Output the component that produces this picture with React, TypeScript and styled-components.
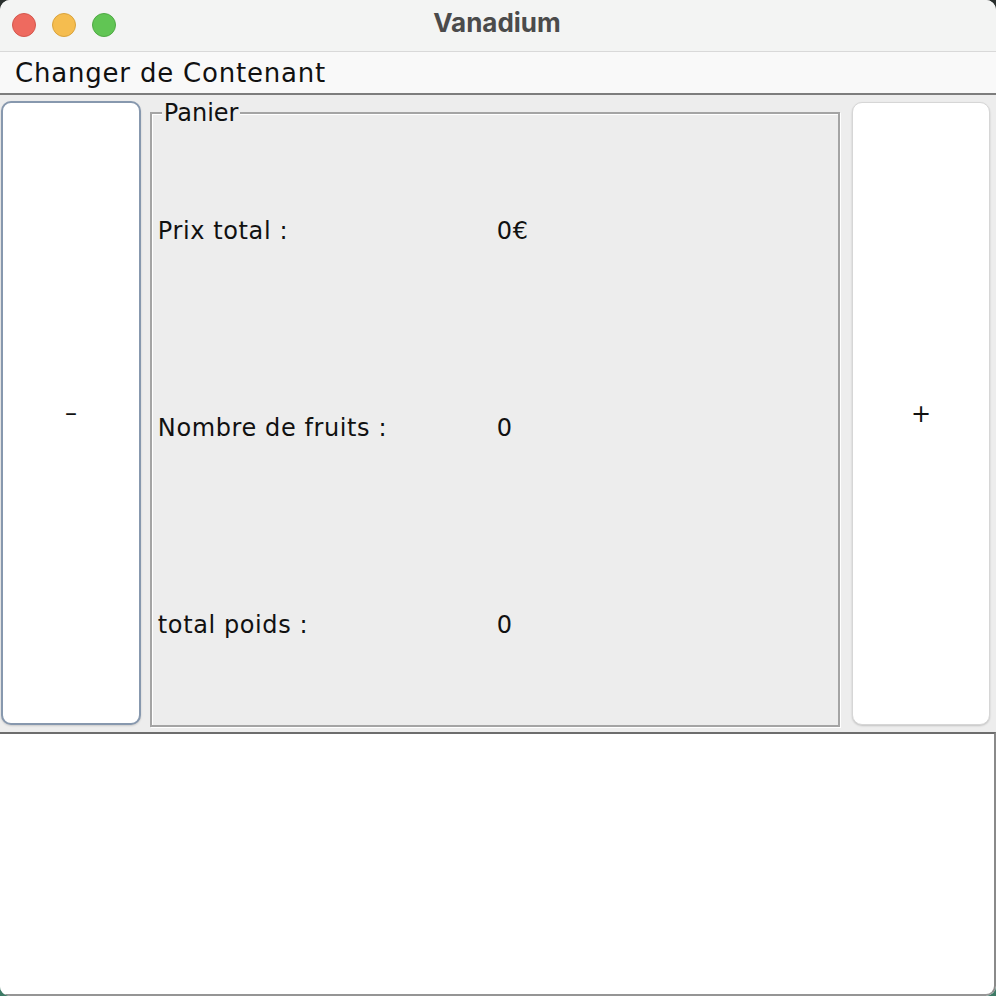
import React from "react";
import styled, { createGlobalStyle } from "styled-components";

const Global = createGlobalStyle`
  html, body { margin: 0; padding: 0; }
  body {
    width: 996px;
    height: 996px;
    overflow: hidden;
    background: linear-gradient(180deg, #2a2f2d 0%, #3d7a65 100%);
    font-family: "DejaVu Sans", "Liberation Sans", sans-serif;
  }
`;

const Window = styled.div`
  width: 996px;
  height: 996px;
  border-radius: 10px;
  overflow: hidden;
  display: flex;
  flex-direction: column;
  background: #ededed;
`;

const TitleBar = styled.div`
  height: 52px;
  box-sizing: border-box;
  border-bottom: 1px solid #d9d9d9;
  background: #f3f4f3;
  display: grid;
  grid-template-columns: 1fr auto 1fr;
  align-items: center;
  padding: 0 12px 2px;
`;

const Lights = styled.div`
  display: flex;
  gap: 16px;
`;

const Light = styled.span<{ $c: string; $b: string }>`
  width: 24px;
  height: 24px;
  border-radius: 50%;
  box-sizing: border-box;
  background: ${(p) => p.$c};
  border: 1px solid ${(p) => p.$b};
`;

const Title = styled.div`
  font-family: Inter, "DejaVu Sans", sans-serif;
  font-weight: 700;
  font-size: 26px;
  color: #4b4b4b;
  padding-right: 2px;
  margin-bottom: 4px;
`;

const MenuBar = styled.div`
  height: 43px;
  box-sizing: border-box;
  border-bottom: 2px solid #7d7d7d;
  background: #f9f9f9;
  display: flex;
  align-items: center;
  padding-left: 15px;
`;

const MenuItem = styled.span`
  font-size: 26px;
  letter-spacing: 0.8px;
  color: #111;
`;

const Content = styled.div`
  height: 637px;
  box-sizing: border-box;
  display: flex;
  padding: 6px 6px 7px 1px;
  background: #ededed;
`;

const SideButton = styled.button<{ $focused?: boolean }>`
  box-sizing: border-box;
  width: ${(p) => (p.$focused ? 140 : 138)}px;
  margin-right: ${(p) => (p.$focused ? 9 : 0)}px;
  margin-left: ${(p) => (p.$focused ? 0 : 12)}px;
  background: #ffffff;
  border-radius: 10px;
  border: ${(p) => (p.$focused ? "2px solid #8798ae" : "1px solid #d6d6d6")};
  box-shadow: ${(p) =>
    p.$focused ? "0 1px 2px rgba(0,0,0,0.15)" : "0 1px 2px rgba(0,0,0,0.18)"};
  font-family: "DejaVu Sans", sans-serif;
  font-size: 24px;
  color: #111;
  padding: 0;
  display: flex;
  align-items: center;
  justify-content: center;
  margin-top: ${(p) => (p.$focused ? 0 : 1)}px;
`;

const Panel = styled.fieldset`
  box-sizing: border-box;
  width: 691px;
  margin: 0;
  padding: 8px 0 2px 6px;
  border: 2px solid #a4a4a4;
  box-shadow: 1px 1px 0 #ffffff, inset 1px 1px 0 #ffffff;
  display: grid;
  grid-template-columns: 339px 1fr;
  grid-template-rows: repeat(3, 1fr);
  align-items: center;
  height: 626px;
  min-width: 0;
`;

const Legend = styled.legend`
  font-size: 24px;
  line-height: 24px;
  padding: 0 2px;
  margin-left: 4px;
  color: #111;
  background: #ededed;
`;

const Label = styled.span`
  font-size: 24px;
  letter-spacing: 0.6px;
  color: #111;
`;

const Console = styled.div`
  flex: 1;
  background: #ffffff;
  border-top: 2px solid #6d6d6d;
  border-right: 2px solid #8a8a8a;
  border-bottom: 2px solid #959595;
  border-bottom-right-radius: 10px;
`;

const rows: [string, string][] = [
  ["Prix total :", "0€"],
  ["Nombre de fruits :", "0"],
  ["total poids :", "0"],
];

export default function App() {
  return (
    <>
      <Global />
      <Window>
        <TitleBar>
          <Lights>
            <Light $c="#ee6a5f" $b="#d4574d" />
            <Light $c="#f5bd4f" $b="#d9a33c" />
            <Light $c="#61c554" $b="#4fa944" />
          </Lights>
          <Title>Vanadium</Title>
          <span />
        </TitleBar>
        <MenuBar>
          <MenuItem>Changer de Contenant</MenuItem>
        </MenuBar>
        <Content>
          <SideButton $focused>–</SideButton>
          <Panel>
            <Legend>Panier</Legend>
            {rows.map(([l, v]) => (
              <React.Fragment key={l}>
                <Label>{l}</Label>
                <Label>{v}</Label>
              </React.Fragment>
            ))}
          </Panel>
          <SideButton>+</SideButton>
        </Content>
        <Console />
      </Window>
    </>
  );
}
